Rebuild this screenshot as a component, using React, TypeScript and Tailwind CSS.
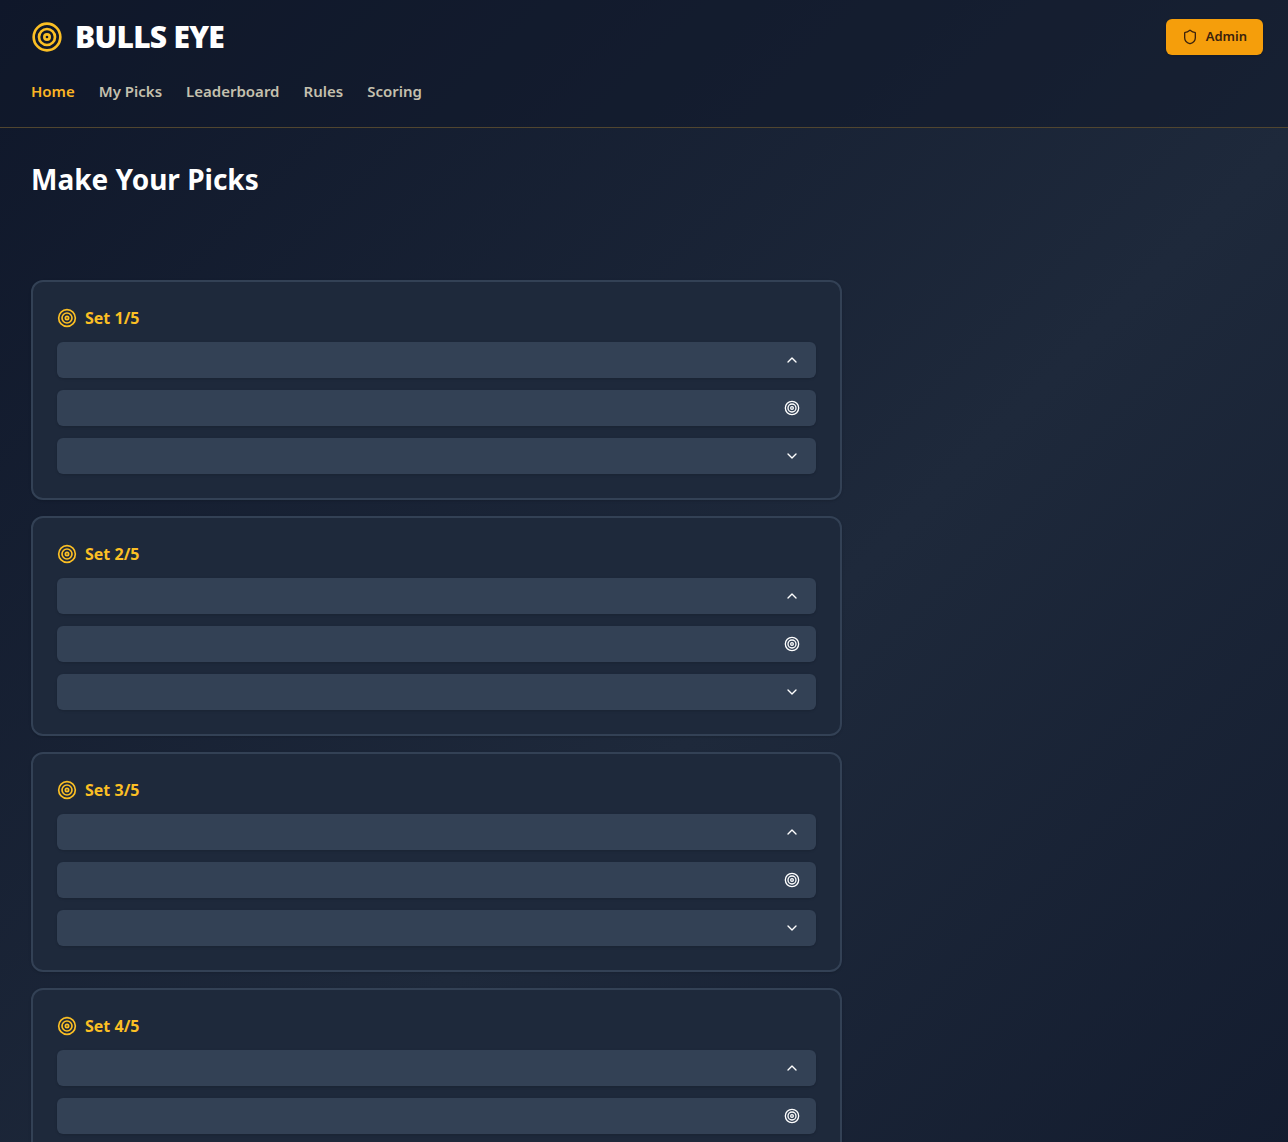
import React from 'react';
import { ChevronDown, ChevronUp, Shield, Target } from 'lucide-react';

const navItems = [
  { id: 'home', label: 'Home' },
  { id: 'my-picks', label: 'My Picks' },
  { id: 'leaderboard', label: 'Leaderboard' },
  { id: 'rules', label: 'Rules' },
  { id: 'scoring', label: 'Scoring' },
];

const TOTAL_SETS = 5;

const pickOptions = [
  { id: 'over', label: 'Over', Icon: ChevronUp },
  { id: 'bullseye', label: 'Bulls eye', Icon: Target },
  { id: 'under', label: 'Under', Icon: ChevronDown },
];

function Header() {
  const [active, setActive] = React.useState('home');

  return (
    <header className="border-b border-[#514630] bg-[#0f172a]/50 pt-[19px] pr-[25px] pb-6 pl-[31px]">
      <div className="flex items-center justify-between">
        <div className="flex items-center gap-3">
          <Target className="h-8 w-8 text-[#fbbf24]" />
          <span className="text-3xl leading-9 font-black tracking-tight text-white">BULLS EYE</span>
        </div>
        <button
          type="button"
          className="flex h-9 items-center gap-2 rounded-md bg-[#f59e0b] px-4 text-[13px] font-semibold text-[#3a220d] shadow-sm hover:bg-[#fbbf24]"
        >
          <Shield className="h-4 w-4" />
          Admin
        </button>
      </div>
      <nav className="mt-6 flex flex-wrap gap-6">
        {navItems.map((item) => (
          <a
            key={item.id}
            href={`#${item.id}`}
            onClick={() => setActive(item.id)}
            className={`text-[15px] leading-6 font-semibold transition-colors ${active === item.id ? 'text-[#fbb524]' : 'text-[#c4c0ae] hover:text-[#fcd34d]'}`}
          >
            {item.label}
          </a>
        ))}
      </nav>
    </header>
  );
}

function SetCard({ index }: { index: number }) {
  const [picked, setPicked] = React.useState<string | null>(null);

  return (
    <section className="rounded-xl border-2 border-[#334155] bg-[#1e293b] p-6 shadow-sm">
      <h2 className="mb-3 flex items-center gap-2 text-base leading-6 font-bold text-[#fbbf24]">
        <Target className="h-5 w-5" />
        Set {index}/{TOTAL_SETS}
      </h2>
      <div className="flex flex-col gap-3">
        {pickOptions.map(({ id, label, Icon }) => (
          <button
            key={id}
            type="button"
            aria-label={label}
            aria-pressed={picked === id}
            onClick={() => setPicked(id)}
            className={`flex h-9 w-full items-center justify-end rounded-md px-4 text-white shadow-sm transition-colors ${picked === id ? 'bg-[#d97706]' : 'bg-[#334155] hover:bg-[#475569]'}`}
          >
            <Icon className="h-4 w-4" />
          </button>
        ))}
      </div>
    </section>
  );
}

export default function App() {
  const sets = Array.from({ length: TOTAL_SETS }, (_, i) => i + 1);

  return (
    <div className="min-h-screen bg-[linear-gradient(135deg,#0f172a_0%,#1e293b_50%,#0f172a_100%)] font-['Noto_Sans','Open_Sans',sans-serif]">
      <Header />
      <main className="pt-[33px] pr-[25px] pb-32 pl-[31px]">
        <h1 className="mb-[83px] text-[28px] leading-9 font-bold text-white">Make Your Picks</h1>
        <div className="grid grid-cols-3 gap-8">
          <div className="col-span-2 flex flex-col gap-4">
            {sets.map((n) => (
              <SetCard key={n} index={n} />
            ))}
          </div>
        </div>
      </main>
    </div>
  );
}
